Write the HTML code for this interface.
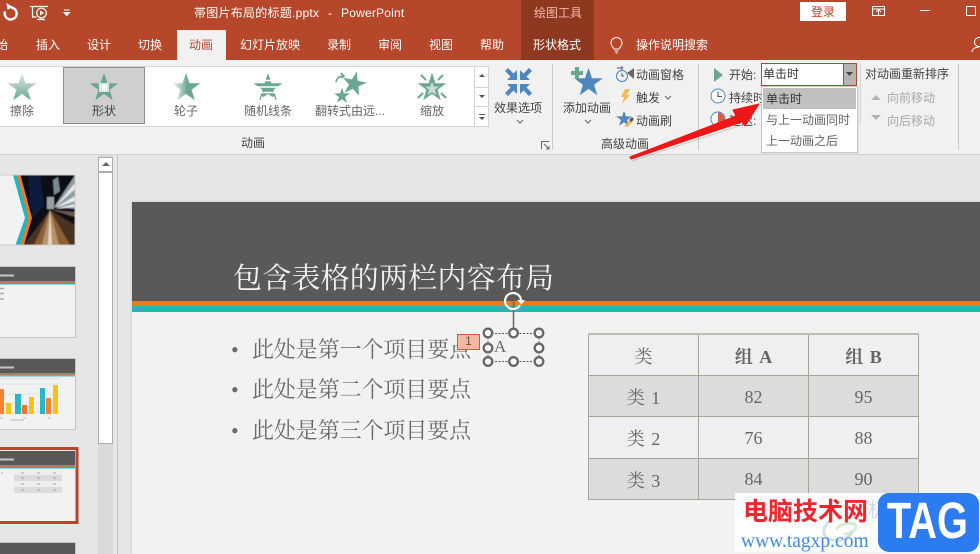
<!DOCTYPE html>
<html><head><meta charset="utf-8">
<style>
html,body{margin:0;padding:0}
body{width:980px;height:554px;overflow:hidden;position:relative;background:#e6e6e6;font-family:"Liberation Sans","Noto Sans CJK SC",sans-serif;font-size:12px;color:#444}
.a{position:absolute}
.t{position:absolute;white-space:nowrap;line-height:16px}
.w{color:#fff}
.c{transform:translateX(-50%)}
.s{font-family:"Liberation Serif","Noto Serif CJK SC",serif;color:#6a6a6a}
.g{color:#a8a8a8}
td{border:1px solid #a5a59c;text-align:center;padding:2px 0 0;box-sizing:border-box;font-family:"Liberation Serif","Noto Serif CJK SC",serif;font-size:18px;color:#666;height:41.4px;word-spacing:2px}
</style></head><body>
<!-- title bar + tabs -->
<div class="a" style="left:0;top:0;width:980px;height:60px;background:#b7472a"></div>
<div class="a" style="left:521px;top:0;width:73px;height:60px;background:#8f3820"></div>
<div class="a" style="left:177px;top:30px;width:49px;height:30px;background:#f1f1f1"></div>
<svg class="a" style="left:0;top:0" width="80" height="30" fill="none" stroke="#fff">
<path d="M11 7.500a6 6 0 1 1-6 4" stroke-width="2.400"/><path d="M7 4l1 5 4-2z" fill="#fff" stroke-width="1"/>
<path d="M30 6.500h18M32.500 7v10h4M37 19.500h8M41 18v2" stroke-width="1.200"/><circle cx="41.500" cy="13" r="4.800" fill="#b7472a" stroke-width="1.200"/><path d="M40 10.500l4 2.500-4 2.500z" fill="#fff" stroke="none"/>
<path d="M64 10h5.500M64 12.500h5.500l-2.750 3z" fill="#fff" stroke-width="1"/>
</svg>
<div class="t w" style="left:194px;top:5px;letter-spacing:.25px">帯图片布局的标题.pptx</div>
<div class="t w" style="left:328px;top:5px">-</div>
<div class="t w" style="left:341px;top:5px;letter-spacing:.2px">PowerPoint</div>
<div class="t" style="left:534px;top:5px;color:#eebba9">绘图工具</div>
<div class="a" style="left:800px;top:2px;width:46px;height:19px;background:#fff"></div>
<div class="t" style="left:811px;top:4px;color:#b7472a">登录</div>
<svg class="a" style="left:860px;top:0" width="120" height="30" fill="none" stroke="#fff"><path d="M12.500 6.500h12v9h-12zM12.500 9h12M18.500 15v-5M16 12l2.500-2.500 2.500 2.500"/><path d="M60 10.500h10"/><path d="M106.500 6.500h9v9h-9z"/></svg>
<div class="t w" style="left:-16px;top:37px">开始</div>
<div class="t w" style="left:36px;top:37px">插入</div>
<div class="t w" style="left:87px;top:37px">设计</div>
<div class="t w" style="left:138px;top:37px">切换</div>
<div class="t" style="left:189px;top:37px;color:#b7472a">动画</div>
<div class="t w" style="left:240px;top:37px">幻灯片放映</div>
<div class="t w" style="left:327px;top:37px">录制</div>
<div class="t w" style="left:378px;top:37px">审阅</div>
<div class="t w" style="left:429px;top:37px">视图</div>
<div class="t w" style="left:480px;top:37px">帮助</div>
<div class="t w" style="left:533px;top:37px">形状格式</div>
<svg class="a" style="left:608px;top:36px" width="20" height="20" fill="none" stroke="#fff"><path d="M6 13c-1-2-3-3-3-6a5.500 5.500 0 0 1 11 0c0 3-2 4-3 6zM6.500 15h4M7.500 17h2"/></svg>
<div class="t w" style="left:636px;top:37px">操作说明搜索</div>
<svg class="a" style="left:970px;top:36px" width="10" height="18" fill="none" stroke="#fff"><circle cx="9" cy="6" r="4.500"/><path d="M2 16c0-3 3-5 7-5"/></svg>

<!-- ribbon -->
<div class="a" style="left:0;top:60px;width:980px;height:94px;background:#f1f1f1;border-bottom:1px solid #d2d2d2"></div>
<div class="a" style="left:0;top:66px;width:488px;height:59px;background:#fff;border:1px solid #d4d4d4;border-left:0"></div>
<div class="a" style="left:474px;top:66px;width:1px;height:60px;background:#d4d4d4"></div>
<div class="a" style="left:475px;top:87px;width:13px;height:1px;background:#d4d4d4"></div>
<div class="a" style="left:475px;top:106px;width:13px;height:1px;background:#d4d4d4"></div>
<svg class="a" style="left:476px;top:67px" width="12" height="58" fill="#555"><path d="M3 10l3-3 3 3zM3 28l3 3 3-3zM3 47h6v1H3zM3 50h6l-3 3z"/></svg>
<div class="a" style="left:63px;top:67px;width:80px;height:55px;background:#d0cfcd;border:1px solid #8e8e8e"></div>

<svg class="a" style="left:0;top:60px" width="480" height="50">
<defs>
<path id="st" d="M0-15L3.500-4.700 14.300-4.700 5.600 1.800 8.800 12.200 0 5.900-8.800 12.200-5.600 1.800-14.300-4.700-3.500-4.700Z"/>
<linearGradient id="wp" x1="0" y1="0" x2="0" y2="1"><stop offset="0" stop-color="#dfeae6"/><stop offset="1" stop-color="#6aa692"/></linearGradient>
<linearGradient id="wh" x1="0" y1="0" x2="1" y2="0"><stop offset=".1" stop-color="#e6efec"/><stop offset=".55" stop-color="#6aa692"/></linearGradient>
</defs>
<use href="#st" x="22" y="28" fill="url(#wp)"/>
<use href="#st" x="104" y="28" fill="#6aa692"/><rect x="99" y="23" width="10" height="9" fill="#d8e8e3"/><rect x="102" y="25" width="5" height="5" fill="#fff"/>
<use href="#st" x="186" y="28" fill="url(#wh)"/>
<use href="#st" x="268" y="28" fill="#6aa692"/><path d="M252 20.500h32M254 27h28M258 32.500h20M262 13h12M261 37.500h14" stroke="#fff" stroke-width="1.600"/>
<g fill="#6aa692"><use href="#st" transform="translate(354 24) rotate(12) scale(.85)"/><use href="#st" transform="translate(342 36) scale(.55)"/></g>
<path d="M336 22a7 7 0 0 1 7-6M341 13l3 3-3 2" stroke="#6aa692" stroke-width="1.600" fill="none"/>
<use href="#st" x="432" y="28" fill="#6aa692"/><use href="#st" transform="translate(432 29) scale(.5)" fill="#c9ded7"/>
<path d="M421 15l5 5M443 15l-5 5M418 38l5-5M446 38l-5-5" stroke="#6aa692" stroke-width="2"/>
</svg>
<div class="t c" style="left:22px;top:103px;color:#666">擦除</div>
<div class="t c" style="left:104px;top:103px">形状</div>
<div class="t c" style="left:186px;top:103px;color:#666">轮子</div>
<div class="t c" style="left:268px;top:103px;color:#666">随机线条</div>
<div class="t c" style="left:350px;top:103px;color:#666">翻转式由远...</div>
<div class="t c" style="left:432px;top:103px;color:#666">缩放</div>
<div class="t c" style="left:253px;top:135px">动画</div>

<!-- effect options -->
<svg class="a" style="left:503px;top:67px" width="32" height="30" fill="#4f86be" stroke="none">
<path d="M14 13V3l-3.500 3.500L5 1 2 4l5.500 5.500L4 13z"/>
<path d="M17 13V3l3.500 3.500L26 1l3 3-5.500 5.500L27 13z"/>
<path d="M14 17v10l-3.500-3.500L5 29l-3-3 5.500-5.500L4 17z"/>
<path d="M17 17v10l3.500-3.500L26 29l3-3-5.500-5.500L27 17z"/>
</svg>
<div class="t" style="left:494px;top:100px">效果选项</div>
<svg class="a" style="left:516px;top:119px" width="10" height="6" fill="none" stroke="#666"><path d="M1 1l3 3 3-3"/></svg>
<svg class="a" style="left:541px;top:141px" width="10" height="10" fill="none" stroke="#666"><path d="M.500 8V.500H8M3 3l5 5M8 5v3H5"/></svg>
<div class="a" style="left:552px;top:64px;width:1px;height:86px;background:#c8c8c8"></div>

<!-- add animation -->
<svg class="a" style="left:570px;top:66px" width="36" height="32"><use href="#st" transform="translate(18.500 17)" fill="#4f86be"/><path d="M5 1h4v4h4v4H9v4H5V9H1V5h4z" fill="#6aa692"/></svg>
<div class="t" style="left:563px;top:100px">添加动画</div>
<svg class="a" style="left:584px;top:119px" width="10" height="6" fill="none" stroke="#666"><path d="M1 1l3 3 3-3"/></svg>
<svg class="a" style="left:615px;top:65px" width="22" height="18" fill="none"><circle cx="7" cy="11" r="5.500" stroke="#4f86be"/><path d="M7 8v3h2M2 3h5" stroke="#555"/><path d="M6 1l2 2-2 2" stroke="#4f86be"/><path d="M12 8l7-5v11z" fill="#666"/></svg>
<div class="t" style="left:636px;top:67px">动画窗格</div>
<svg class="a" style="left:619px;top:88px" width="14" height="18" fill="#f2bc5a"><path d="M6 1h5L8 7h3L3 16l2-7H2z"/></svg>
<div class="t" style="left:636px;top:90px">触发</div>
<svg class="a" style="left:664px;top:95px" width="8" height="6" fill="none" stroke="#666"><path d="M1 1l3 3 3-3"/></svg>
<svg class="a" style="left:616px;top:111px" width="19" height="18"><use href="#st" transform="translate(8 8) scale(.55)" fill="#4f86be"/><path d="M8 15l8-7 2 2-7 6z" fill="#e9b95c"/><path d="M13 9l3-3 2 2-3 3z" fill="#555"/></svg>
<div class="t" style="left:636px;top:113px">动画刷</div>
<div class="t" style="left:601px;top:136px">高级动画</div>
<div class="a" style="left:698px;top:64px;width:1px;height:86px;background:#c8c8c8"></div>

<!-- timing -->
<svg class="a" style="left:714px;top:68px" width="10" height="14" fill="#6aa692"><path d="M0 0l9 7-9 7z"/></svg>
<div class="t" style="left:729px;top:67px">开始:</div>
<svg class="a" style="left:710px;top:88px" width="16" height="16" fill="none"><circle cx="8" cy="8" r="7" stroke="#4f86be" fill="#fff"/><path d="M8 3.500V8.500h4" stroke="#555"/></svg>
<div class="t" style="left:729px;top:90px">持续时</div>
<svg class="a" style="left:710px;top:111px" width="16" height="16" fill="none"><circle cx="8" cy="8" r="7" stroke="#4f86be" fill="#fff"/><path d="M8 8V1.500A6.500 6.500 0 0 1 8 14.500z" fill="#d8604a"/></svg>
<div class="t" style="left:729px;top:113px">延迟:</div>
<div class="a" style="left:761px;top:63px;width:93px;height:21px;background:#fff;border:1px solid #b7472a"></div>
<div class="a" style="left:843px;top:63px;width:12px;height:21px;background:#b4b4b4;border:1px solid #b7472a"></div>
<svg class="a" style="left:845px;top:72px" width="10" height="5" fill="#444"><path d="M1 0h7L4.500 4z"/></svg>
<div class="t" style="left:763px;top:66px;color:#333">单击时</div>
<div class="a" style="left:860px;top:64px;width:1px;height:60px;background:#d4d4d4"></div>
<div class="t" style="left:865px;top:66px">对动画重新排序</div>
<svg class="a" style="left:870px;top:92px" width="12" height="34" fill="#b4b4b4"><path d="M1 8l5-5 5 5zM1 23l5 5 5-5z"/></svg>
<div class="t g" style="left:887px;top:90px">向前移动</div>
<div class="t g" style="left:887px;top:113px">向后移动</div>
<div class="a" style="left:958px;top:64px;width:1px;height:86px;background:#c8c8c8"></div>

<!-- dropdown -->
<div class="a" style="left:761px;top:86px;width:95px;height:65px;background:#fff;border:1px solid #c6c6c6;box-shadow:1px 1px 1px #ddd"></div>
<div class="a" style="left:763px;top:88px;width:93px;height:21px;background:#c0c0c0"></div>
<div class="t" style="left:766px;top:91px;color:#333">单击时</div>
<div class="t" style="left:766px;top:112px;color:#666">与上一动画同时</div>
<div class="t" style="left:766px;top:133px;color:#666">上一动画之后</div>

<!-- thumbnails pane -->
<div class="a" style="left:98px;top:155px;width:15px;height:399px;background:#d9d9d9"></div>
<div class="a" style="left:98px;top:157px;width:13px;height:13px;background:#fff;border:1px solid #adadad"></div>
<svg class="a" style="left:101px;top:161px" width="10" height="6" fill="#666"><path d="M1 5l4-4 4 4z"/></svg>
<div class="a" style="left:98px;top:172px;width:13px;height:270px;background:#fff;border:1px solid #adadad"></div>
<div class="a" style="left:117px;top:155px;width:1px;height:399px;background:#c4c4c4"></div>

<svg class="a" style="left:0;top:155px" width="80" height="399">
<defs>
<clipPath id="cp1"><rect x="0" y="20" width="75" height="70"/></clipPath>
<filter id="bl" x="-5%" y="-5%" width="110%" height="110%"><feGaussianBlur stdDeviation=".6"/></filter>
<filter id="bs" x="-5%" y="-5%" width="110%" height="110%"><feGaussianBlur stdDeviation=".35"/></filter>
</defs>
<!-- 1 -->
<rect x="0" y="20" width="75" height="70" fill="#f2f2f2"/>
<g clip-path="url(#cp1)"><g filter="url(#bl)">
<rect x="18" y="18" width="60" height="74" fill="#0c1018"/>
<path d="M28 20l12 0 4 30-12 14z" fill="#0e1c3e"/>
<path d="M54 52l21-32v34z" fill="#8f9ca2"/><path d="M55 52l20-24v6zM55 53l20-12v5zM55 54l20-5v3z" fill="#e8ecee"/><path d="M53 25l5-3 2 14-6 4z" fill="#7a8a94"/>
<path d="M47 42h7v12h-7z" fill="#9aa0a0"/>
<path d="M50 55L24 90h51V70z" fill="#4a3020"/>
<path d="M50 55L34 90h36z" fill="#8e6038"/>
<path d="M50 55L42 90h17z" fill="#b8946c"/>
<path d="M50 55l-2 35h4z" fill="#e8dac8"/>
<path d="M75 62L52 55l23 2z" fill="#6b5a4a"/>
</g></g>
<path d="M0 20h13l13 43-8 27H0z" fill="#f2f2f2"/>
<path d="M13 20h4.500L30 63l-9 27h-5.500L25 63z" fill="#22b5be"/>
<path d="M17 20h3.500L32 63l-8 27h-3.500L28.500 63z" fill="#ec7a24"/>
<path d="M0 62h5" stroke="#aaa" stroke-width="3" filter="url(#bs)"/>
<rect x="-1" y="20" width="76" height="70" fill="none" stroke="#cccccc"/>
<!-- 2 -->
<rect x="-1" y="111.500" width="76.500" height="71" fill="#f2f2f2" stroke="#c6c6c6"/><rect x="0" y="112" width="75" height="14" fill="#595959"/><rect x="0" y="126" width="75" height="2" fill="#b08050"/><rect x="0" y="128" width="75" height="1.500" fill="#22b5be"/>
<g filter="url(#bs)"><path d="M0 120.500h14" stroke="#c8c8c8" stroke-width="2"/><path d="M0 133.500h4M0 138.500h4M0 144h4" stroke="#aaa" stroke-width="1.500"/></g>
<!-- 3 -->
<rect x="-1" y="203.500" width="76.500" height="71" fill="#f2f2f2" stroke="#c6c6c6"/><rect x="0" y="204" width="75" height="14" fill="#595959"/><rect x="0" y="218" width="75" height="2" fill="#b08050"/><rect x="0" y="220" width="75" height="1.500" fill="#4fc0c8"/>
<g filter="url(#bs)"><path d="M0 212.500h14" stroke="#c8c8c8" stroke-width="2"/>
<path d="M0 223.500h60" stroke="#e4e4e4" stroke-width="2"/><path d="M0 229h60M0 239h60M0 248h60M0 257h60" stroke="#e2e2e2"/>
<rect x="0" y="234" width="4" height="25" fill="#f58230"/><rect x="6" y="248" width="5" height="11" fill="#f5c518"/><rect x="15" y="239" width="6" height="20" fill="#2ab7c4"/><rect x="22" y="250" width="5" height="9" fill="#f07424"/><rect x="29" y="242" width="5" height="17" fill="#f5c518"/><rect x="40" y="233" width="5" height="26" fill="#2ab7c4"/><rect x="46" y="243" width="5" height="16" fill="#f58230"/><rect x="53" y="230" width="5" height="29" fill="#f5c518"/>
<path d="M0 263h3M10 265h14M23 263h3M48 263h3" stroke="#bbb"/></g>
<!-- 4 -->
<rect x="-4" y="293.500" width="81" height="74" fill="#f2f2f2" stroke="#b7472a" stroke-width="3"/>
<rect x="0" y="296" width="75" height="14" fill="#595959"/><rect x="0" y="310" width="75" height="2" fill="#b08050"/><rect x="0" y="312" width="75" height="1.500" fill="#22b5be"/>
<g filter="url(#bs)"><path d="M0 304.500h14" stroke="#c8c8c8" stroke-width="2"/>
<rect x="14" y="314" width="48" height="6" fill="#eee"/><rect x="14" y="320" width="48" height="6" fill="#dcdcdc"/><rect x="14" y="326" width="48" height="6" fill="#eee"/><rect x="14" y="332" width="48" height="6" fill="#dcdcdc"/>
<path d="M21 318h3M37 318h3M53 318h3M21 323h3M37 323h3M53 323h3M21 329h3M37 329h3M53 329h3M21 335h3M37 335h3M53 335h3M1 318h2" stroke="#aaa"/></g>
<!-- 5 -->
<rect x="-1" y="387.500" width="76.500" height="20" fill="#f2f2f2" stroke="#c6c6c6"/><rect x="0" y="388" width="75" height="14" fill="#595959"/><path d="M0 396.500h26" stroke="#c8c8c8" stroke-width="2" filter="url(#bs)"/>
</svg>

<!-- slide -->
<div class="a" style="left:132px;top:202px;width:848px;height:352px;background:#f2f2f2;box-shadow:0 0 2px #bbb"></div>
<div class="a" style="left:132px;top:202px;width:848px;height:99px;background:#595959"></div>
<div class="a" style="left:132px;top:301px;width:848px;height:5px;background:#ec7a24"></div>
<div class="a" style="left:132px;top:306px;width:848px;height:6px;background:#22b5be"></div>
<div class="t s" style="left:233px;top:261px;font-size:29px;line-height:36px;color:#f2f2f2;letter-spacing:.2px">包含表格的两栏内容布局</div>
<div class="t s" style="left:231px;top:336px;font-size:22px;line-height:28px">•</div>
<div class="t s" style="left:252px;top:336px;font-size:22px;line-height:28px;letter-spacing:-.1px">此处是第一个项目要点</div>
<div class="t s" style="left:231px;top:376px;font-size:22px;line-height:28px">•</div>
<div class="t s" style="left:252px;top:376px;font-size:22px;line-height:28px;letter-spacing:-.1px">此处是第二个项目要点</div>
<div class="t s" style="left:231px;top:417px;font-size:22px;line-height:28px">•</div>
<div class="t s" style="left:252px;top:417px;font-size:22px;line-height:28px;letter-spacing:-.1px">此处是第三个项目要点</div>

<!-- selected object -->
<div class="a" style="left:457px;top:334px;width:21px;height:14px;background:#f4b9a0;border:1px solid #d0583a;text-align:center;line-height:13px;font-size:12px;color:#555">1</div>
<div class="t s" style="left:494px;top:336px;font-size:17px;line-height:22px">A</div>
<svg class="a" style="left:478px;top:288px" width="72" height="82" fill="none">
<path d="M35.500 14v30" stroke="#666" stroke-width="1.500"/>
<path d="M10 45.500h51M10 73.500h51M10 46v28M61 46v28" stroke="#555" stroke-dasharray="2 1.500"/>
<g fill="#fafafa" stroke="#666" stroke-width="2.300"><circle cx="10" cy="45" r="4.300"/><circle cx="35.500" cy="45" r="4.300"/><circle cx="61" cy="45" r="4.300"/><circle cx="10" cy="60" r="4.300"/><circle cx="61" cy="60" r="4.300"/><circle cx="10" cy="73.500" r="4.300"/><circle cx="35.500" cy="73.500" r="4.300"/><circle cx="61" cy="73.500" r="4.300"/></g>
<path d="M43 12a8 8 0 1 0-1 5" stroke="#fff" stroke-width="2.200"/><path d="M39 12h8l-3.500 4.500z" fill="#fff"/>
</svg>

<!-- table -->
<table class="a" style="left:588px;top:333px;width:331px;border-collapse:collapse;table-layout:fixed;background:#efefef;border-top:2px solid #bdbdb4">
<tr><td>类</td><td style="font-weight:bold">组 A</td><td style="font-weight:bold">组 B</td></tr>
<tr style="background:#dcdcda"><td>类 1</td><td>82</td><td>95</td></tr>
<tr><td>类 2</td><td>76</td><td>88</td></tr>
<tr style="background:#dcdcda"><td>类 3</td><td>84</td><td>90</td></tr>
</table>

<!-- red arrow -->
<svg class="a" style="left:620px;top:90px" width="150" height="75"><path d="M139 14L113 20 116 26 10 67 11 69 122 32 125 36Z" fill="#ee1616" stroke="#ee1616" stroke-width="1" stroke-linejoin="round"/><path d="M12 71L122 35" stroke="#888" stroke-width="1" opacity=".35"/></svg>

<!-- watermark -->
<div class="a" style="left:735px;top:493px;width:245px;height:59px;background:rgba(255,255,255,.9)"></div>
<svg class="a" style="left:820px;top:515px" width="60" height="34" fill="none" stroke-width="3"><path d="M12 5C2 10 0 22 12 25c8 2 18-2 20-8" stroke="#9fc4dc" opacity=".45"/><path d="M16 14c6-6 18-8 20-3 1 4-6 8-12 8" stroke="#a8d89a" opacity=".45"/></svg>
<div class="t" style="left:743px;top:496px;font-size:25px;line-height:32px;font-weight:bold;color:#f0262c">电脑技术网</div>
<div class="t" style="left:741px;top:531px;font-family:'Liberation Serif',serif;font-size:19.500px;line-height:22px;color:#3f8ae6">www.tagxp.com</div>
<div class="t" style="left:868px;top:498px;font-size:20px;line-height:26px;color:#c9dcee">极光下载站</div>
<div class="a" style="left:878px;top:493px;width:101px;height:59px;background:#2b7cf0;border-radius:11px"></div>
<div class="t" style="left:876px;top:492px;width:99px;text-align:center;color:#fff;font-weight:bold;font-size:51px;line-height:58px;transform:scaleX(.78)">TAG</div>
</body></html>
